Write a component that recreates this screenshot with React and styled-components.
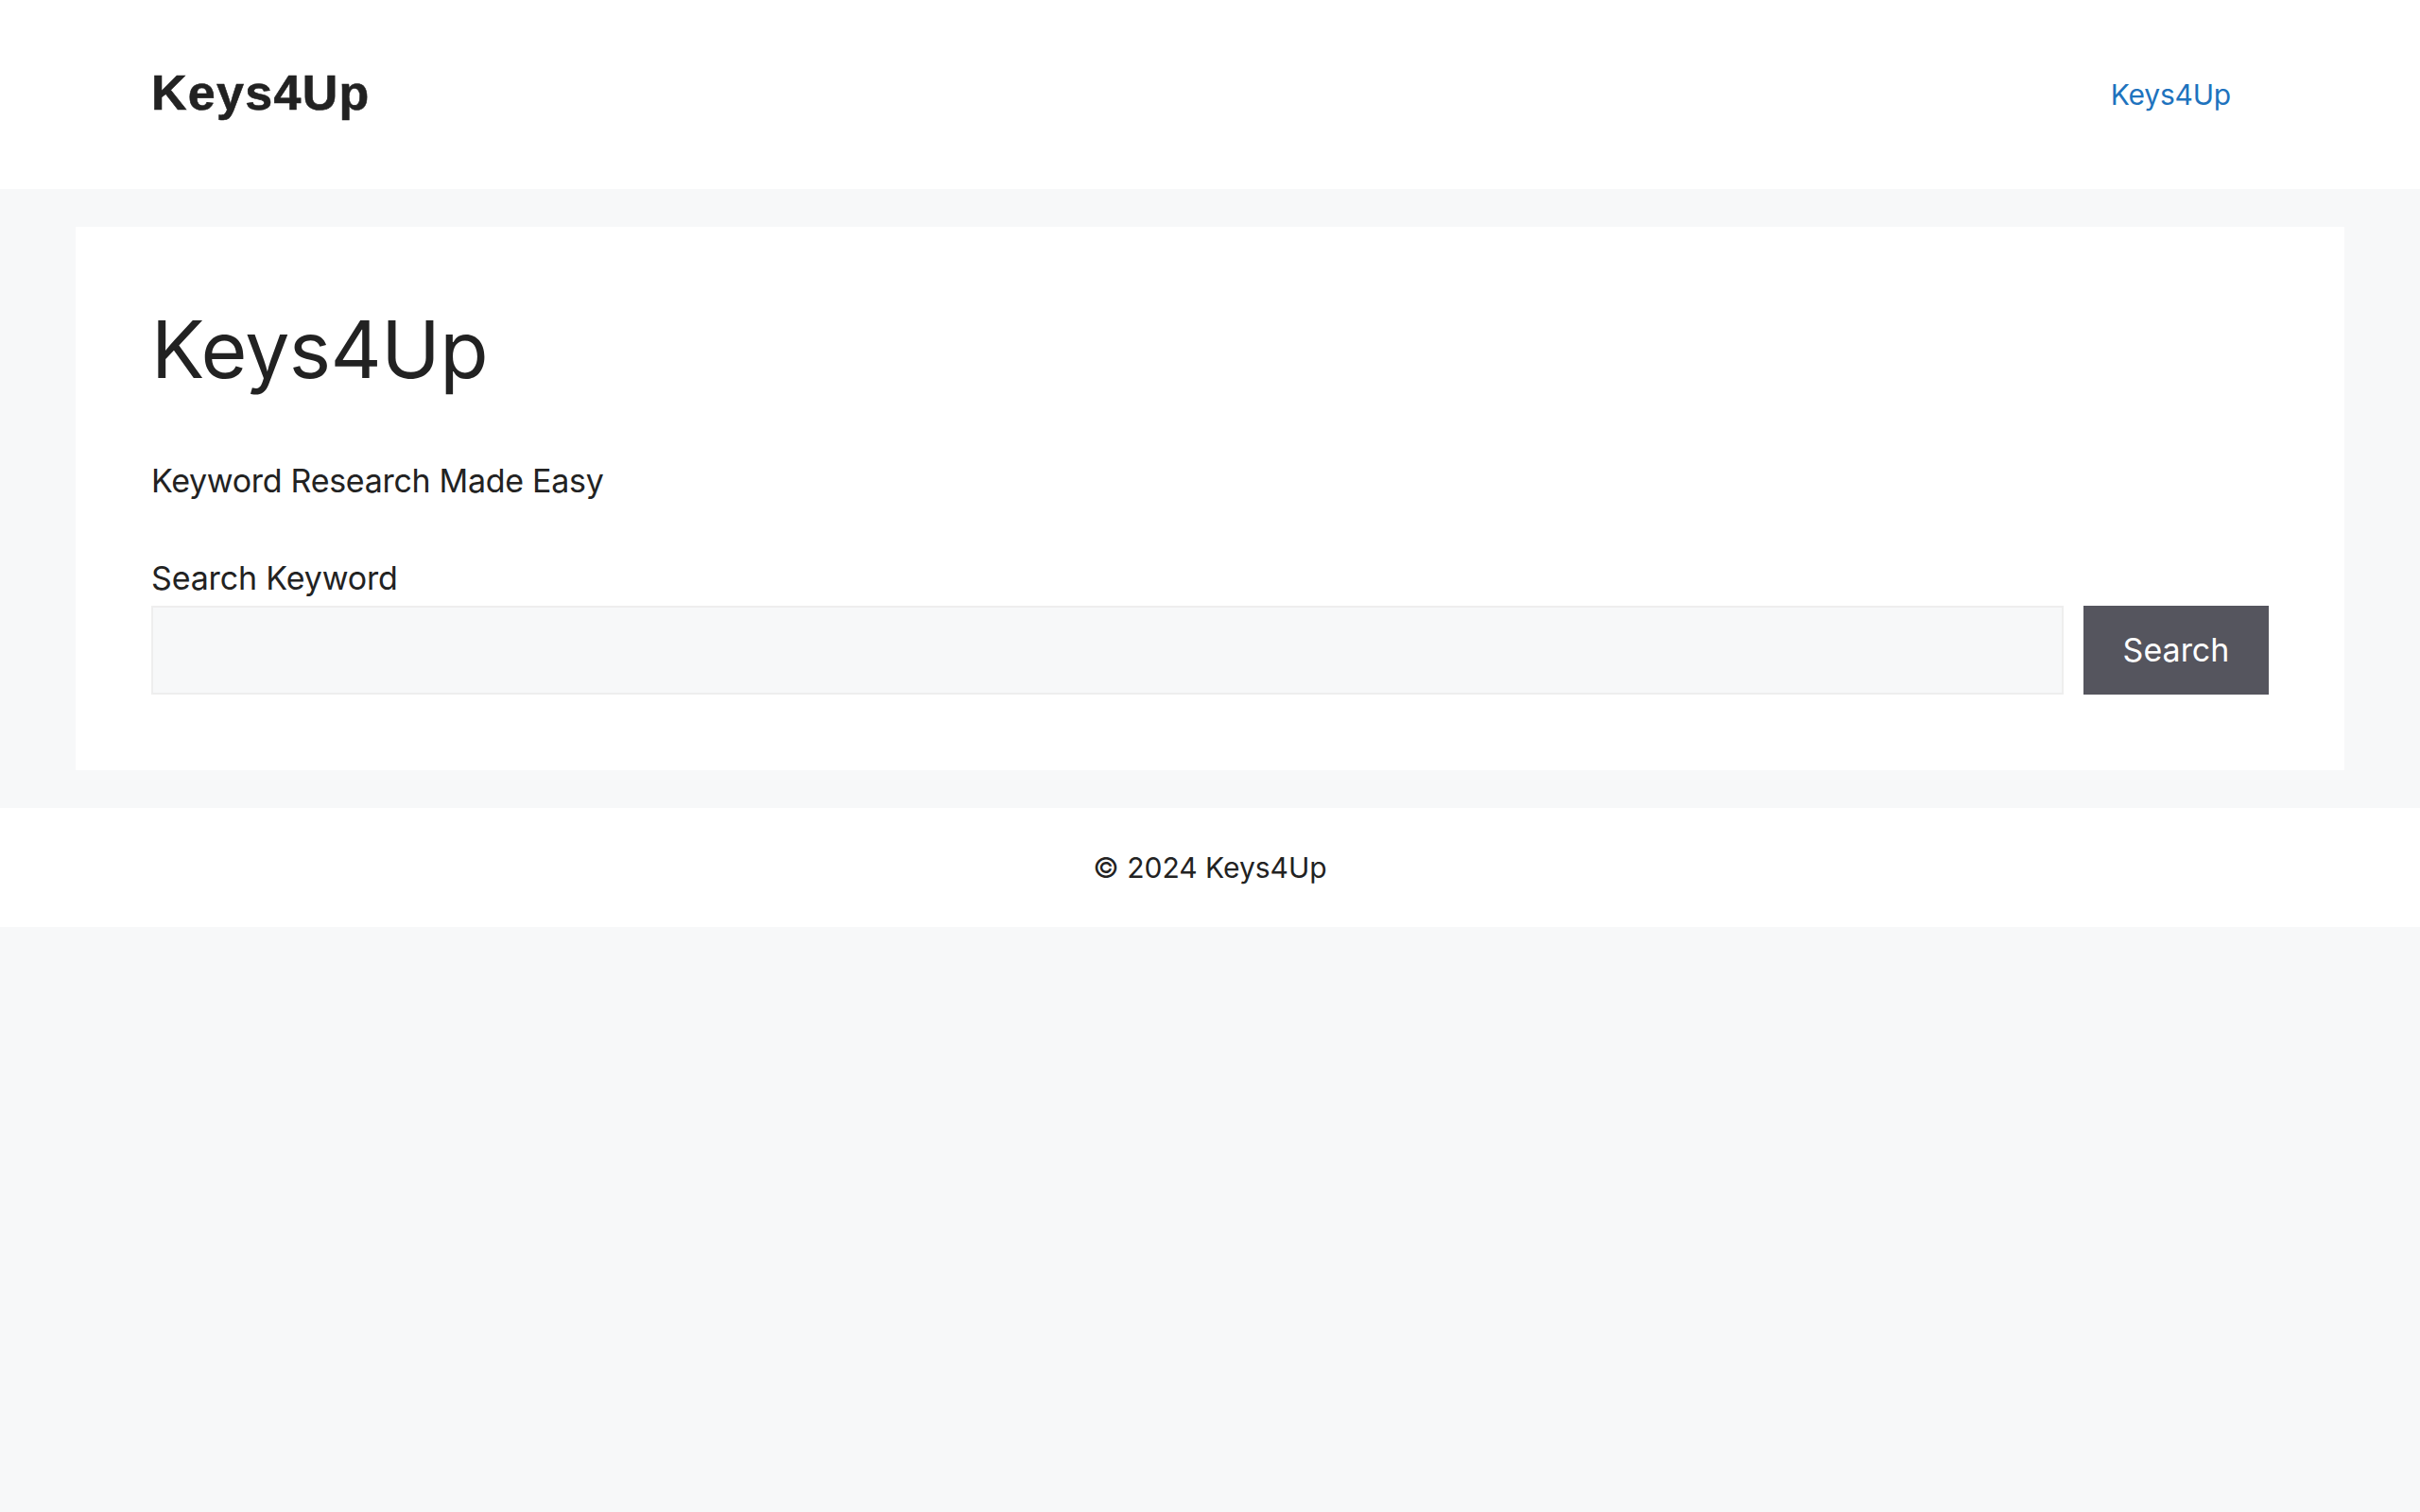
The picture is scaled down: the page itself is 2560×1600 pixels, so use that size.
import React from "react";
import styled, { createGlobalStyle } from "styled-components";

const Global = createGlobalStyle`
  html, body { margin: 0; padding: 0; background: #f7f8f9; }
  body {
    font-family: Inter, "Noto Sans", "Liberation Sans", sans-serif;
    color: #222222;
    -webkit-font-smoothing: antialiased;
  }
  * { box-sizing: border-box; }
`;

const Page = styled.div`
  min-height: 1600px;
  background: #f7f8f9;
  display: flex;
  flex-direction: column;
`;

const Header = styled.header`
  height: 200px;
  background: #ffffff;
  display: flex;
  align-items: center;
  justify-content: space-between;
  padding: 0 160px;
`;

const Brand = styled.a`
  font-family: "Liberation Sans", Arial, sans-serif;
  font-weight: 700;
  font-size: 52px;
  letter-spacing: 1.3px;
  -webkit-text-stroke: 0.6px #222222;
  color: #222222;
  text-decoration: none;
  line-height: 1;
  margin-top: -4px;
`;

const NavLink = styled.a`
  font-size: 30px;
  color: #1e73be;
  text-decoration: none;
  padding: 0 40px;
  line-height: 1;
  letter-spacing: -0.2px;
`;

const Main = styled.main`
  padding: 40px 80px;
`;

const Card = styled.section`
  background: #ffffff;
  padding: 80px;
`;

const Title = styled.h1`
  margin: 0 0 62px;
  font-weight: 400;
  font-size: 84px;
  line-height: 1.2;
  letter-spacing: -0.6px;
  color: #222222;
`;

const Lead = styled.p`
  margin: 0 0 52px;
  font-size: 34px;
  line-height: 51px;
  letter-spacing: -0.3px;
`;

const Label = styled.label`
  display: block;
  font-size: 34px;
  line-height: 51px;
  letter-spacing: -0.15px;
  margin-bottom: 4px;
`;

const Row = styled.form`
  display: flex;
  gap: 21px;
  height: 94px;
`;

const Input = styled.input`
  flex: 1;
  height: 94px;
  background: #f7f8f9;
  border: 2px solid #eeeeee;
  font-size: 34px;
  padding: 0 20px;
  color: #222;
  outline: none;
  font-family: inherit;
`;

const Button = styled.button`
  width: 196px;
  height: 94px;
  background: #55555e;
  color: #ffffff;
  border: none;
  font-family: inherit;
  font-size: 34px;
  padding: 0;
  cursor: pointer;
`;

const Footer = styled.footer`
  background: #ffffff;
  height: 126px;
  display: flex;
  align-items: center;
  justify-content: center;
  font-size: 30px;
  color: #222222;
`;

export default function App() {
  return (
    <Page>
      <Global />
      <Header>
        <Brand href="#">Keys4Up</Brand>
        <NavLink href="#">Keys4Up</NavLink>
      </Header>
      <Main>
        <Card>
          <Title>Keys4Up</Title>
          <Lead>Keyword Research Made Easy</Lead>
          <Label htmlFor="kw">Search Keyword</Label>
          <Row onSubmit={(e) => e.preventDefault()}>
            <Input id="kw" type="text" />
            <Button type="submit">Search</Button>
          </Row>
        </Card>
      </Main>
      <Footer>© 2024 Keys4Up</Footer>
    </Page>
  );
}
